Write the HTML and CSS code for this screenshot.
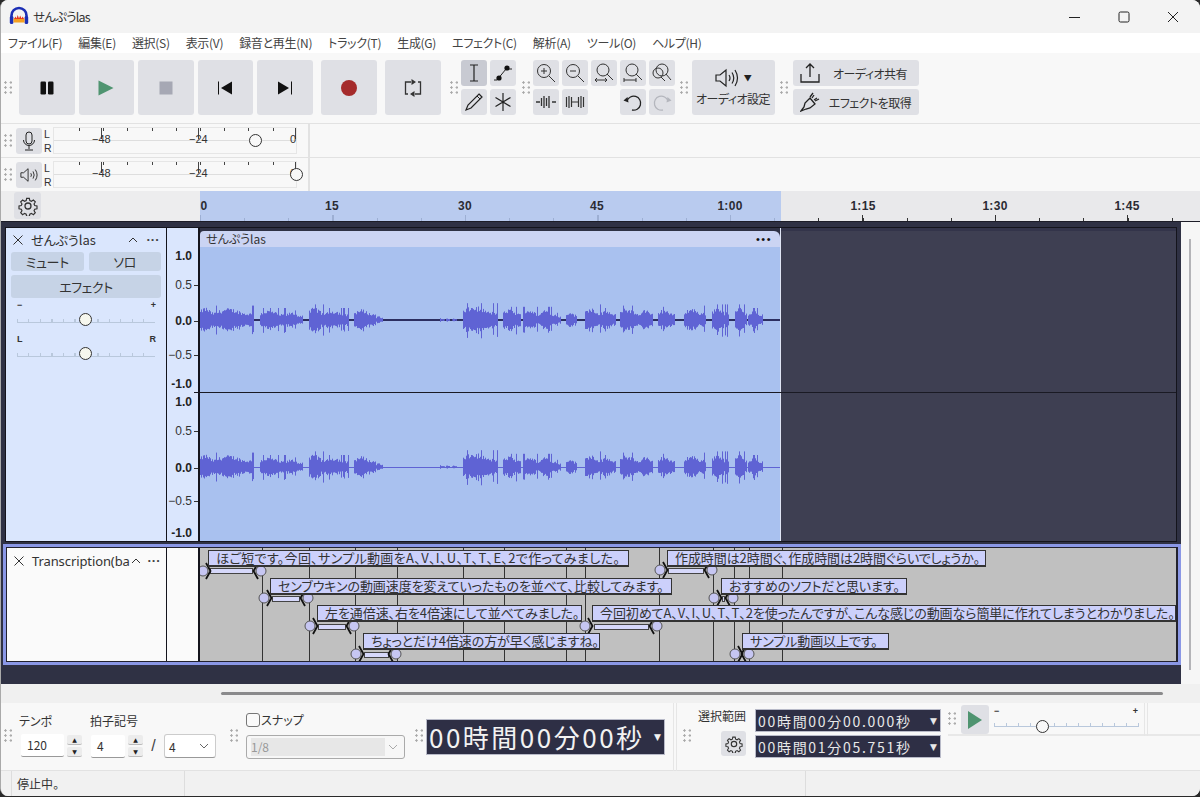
FILE: index.html
```html
<!DOCTYPE html>
<html lang="ja">
<head>
<meta charset="utf-8">
<title>せんぷうlas</title>
<link rel="stylesheet" href="styles.css">
</head>
<body>
<div class="window">
  <header class="titlebar">
    <svg class="logo" viewBox="0 0 20 20"><path d="M2.500 13V9.500a7.500 7.500 0 0 1 15 0V13" fill="none" stroke="#1c2fb5" stroke-width="2.600"/><rect x="0.800" y="10" width="3.600" height="8" rx="1.500" fill="#1c2fb5"/><rect x="15.600" y="10" width="3.600" height="8" rx="1.500" fill="#1c2fb5"/><path d="M4.500 12.500h11v4h-11z" fill="#f5a020"/><path d="M5 13l1.500-2.500 1 2 1.200-3.500 1.300 3.500 1.200-3 1.300 3 1.200-2 1.300 2.500z" fill="#e8381c"/></svg>
    <span class="title">せんぷうlas</span>
    <div class="winctl">
      <svg viewBox="0 0 12 12"><path d="M0 6.500h11" stroke="#222" fill="none"/></svg>
      <svg viewBox="0 0 12 12"><rect x="1" y="1" width="10" height="10" rx="1.500" stroke="#222" fill="none"/></svg>
      <svg viewBox="0 0 12 12"><path d="M1 1l10 10M11 1L1 11" stroke="#222" fill="none"/></svg>
    </div>
  </header>
  <nav class="menubar">
    <span>ファイル(F)</span><span>編集(E)</span><span>選択(S)</span><span>表示(V)</span><span>録音と再生(N)</span><span>トラック(T)</span><span>生成(G)</span><span>エフェクト(C)</span><span>解析(A)</span><span>ツール(O)</span><span>ヘルプ(H)</span>
  </nav>
  <section class="toolbar">
    <i class="grip"></i>
    <div class="transport">
      <button class="big"><svg viewBox="0 0 16 16"><rect x="1.500" y="1.500" width="5.500" height="13" rx="1.200" fill="#111"/><rect x="9" y="1.500" width="5.500" height="13" rx="1.200" fill="#111"/></svg></button>
      <button class="big"><svg viewBox="0 0 16 16"><path d="M0.500 0.500L15.500 8 0.500 15.500z" fill="#4f9470"/></svg></button>
      <button class="big"><svg viewBox="0 0 16 16"><rect x="1.500" y="1.500" width="13" height="13" fill="#a6a8b4"/></svg></button>
      <button class="big"><svg viewBox="0 0 16 16"><path d="M1.500 1.500v13" stroke="#111" fill="none"/><path d="M15 1.500v13L4 8z" fill="#111"/></svg></button>
      <button class="big"><svg viewBox="0 0 16 16"><path d="M14.500 1.500v13" stroke="#111" fill="none"/><path d="M1 1.500v13L12 8z" fill="#111"/></svg></button>
      <button class="big gap-l"><svg viewBox="0 0 16 16"><circle cx="8" cy="8" r="8" fill="#a52b2b"/></svg></button>
      <button class="big gap-l"><svg class="loop" viewBox="0 0 18 18"><path d="M7 3H1.500v12h2.500M11 15h5.500V3H14" fill="none" stroke="#333" stroke-width="1.300"/><path d="M12 3l-4.500-3v6zM6 15l4.500-3v6z" fill="#333"/></svg></button>
    </div>
    <i class="grip g-tools"></i>
    <div class="tools">
      <button class="sm on"><svg viewBox="0 0 20 20"><path d="M6 2h8M6 18h8M10 2v16" stroke="#222" fill="none" stroke-width="1.200"/></svg></button>
      <button class="sm"><svg viewBox="0 0 20 20"><path d="M1 17h3l9-11h6" fill="none" stroke="#222"/><circle cx="6" cy="15" r="2.600" fill="#111"/><circle cx="14" cy="5" r="2.600" fill="#111"/></svg></button>
      <button class="sm"><svg viewBox="0 0 20 20"><path d="M15 2l3 3L7 16l-5 2 2-5z" fill="none" stroke="#222" stroke-width="1.200"/><path d="M13 4l3 3" stroke="#222"/></svg></button>
      <button class="sm"><svg viewBox="0 0 20 20"><path d="M10 1v18M2.500 5.500l15 9M17.500 5.500l-15 9" stroke="#222" fill="none" stroke-width="1.200"/></svg></button>
    </div>
    <i class="grip g-zoom"></i>
    <div class="zooms">
      <button class="sm"><svg viewBox="0 0 20 20"><circle cx="8" cy="8" r="6.500" fill="none" stroke="#333"/><path d="M13 13l6 6M5 8h6M8 5v6" stroke="#333" fill="none"/></svg></button>
      <button class="sm"><svg viewBox="0 0 20 20"><circle cx="8" cy="8" r="6.500" fill="none" stroke="#333"/><path d="M13 13l6 6M5 8h6" stroke="#333" fill="none"/></svg></button>
      <button class="sm"><svg viewBox="0 0 20 20"><circle cx="9" cy="7" r="6" fill="none" stroke="#333"/><path d="M13 11l6 6M1 17h12M3 15l-2 2 2 2M11 15l2 2-2 2" stroke="#333" fill="none"/></svg></button>
      <button class="sm"><svg viewBox="0 0 20 20"><circle cx="9" cy="7" r="6" fill="none" stroke="#333"/><path d="M13 11l6 6M1 17h12M1 15v4M13 15v4" stroke="#333" fill="none"/></svg></button>
      <button class="sm"><svg viewBox="0 0 20 20"><circle cx="10" cy="7" r="6" fill="none" stroke="#333"/><circle cx="6" cy="10" r="5" fill="none" stroke="#333"/><path d="M14 11l5 6M9 14l4 4" stroke="#333" fill="none"/></svg></button>
      <button class="sm"><svg viewBox="0 0 20 20"><path d="M0 10h4M16 10h4M5.500 6v8M8 4v12M10.500 6v8M13 4v12" stroke="#333" fill="none" stroke-width="1.300"/></svg></button>
      <button class="sm"><svg viewBox="0 0 20 20"><path d="M7 10h6M1.500 5v10M4 4v12M6.500 5v10M13.500 5v10M16 4v12M18.500 5v10" stroke="#333" fill="none" stroke-width="1.200"/></svg></button>
      <span class="blank"></span>
      <button class="sm"><svg viewBox="0 0 20 20"><path d="M4 9a7 7 0 1 1 5 9" fill="none" stroke="#222" stroke-width="1.300"/><path d="M0.500 8.500L4.500 5l1 5.500z" fill="#222"/></svg></button>
      <button class="sm"><svg viewBox="0 0 20 20"><path d="M16 9a7 7 0 1 0-5 9" fill="none" stroke="#b4b6bd" stroke-width="1.300"/><path d="M19.500 8.500L15.500 5l-1 5.500z" fill="#b4b6bd"/></svg></button>
    </div>
    <i class="grip g-audio"></i>
    <button class="audio">
      <span class="audio-ic"><svg viewBox="0 0 24 20"><path d="M1 7v6h4l6 5V2L5 7z" fill="none" stroke="#222" stroke-width="1.200"/><path d="M14 7q2 3 0 6M17 4.500q3.500 5.500 0 11M20 2q5 8 0 16" fill="none" stroke="#222" stroke-width="1.200"/></svg><b>▼</b></span>
      <span>オーディオ設定</span>
    </button>
    <i class="grip g-share"></i>
    <div class="shares">
      <button class="wide"><svg viewBox="0 0 20 20"><path d="M1 11v8h18v-8M10 14V2M6 5l4-4 4 4" fill="none" stroke="#222" stroke-width="1.300"/></svg><span>オーディオ共有</span></button>
      <button class="wide"><svg viewBox="0 0 20 20"><path d="M1 19l3-4 1-4 5-5 5 6-5 4-4 1zM10 5l3-4M15 9l4-2M12 6l2-3M14 8l3-2" fill="none" stroke="#222" stroke-width="1.300"/></svg><span>エフェクトを取得</span></button>
    </div>
  </section>

  <section class="meter-row">
    <i class="grip"></i>
    <button class="mbtn"><svg viewBox="0 0 16 20"><rect x="5" y="1" width="6" height="12" rx="3" fill="none" stroke="#222"/><path d="M2.500 9a5.500 5.500 0 0 0 11 0M8 15v3M4 19h8" fill="none" stroke="#222"/></svg></button>
    <div class="lr"><span>L</span><span>R</span></div>
    <div class="meter"><span class="mt" style="left:38px">−48</span><span class="mt" style="left:135px">−24</span><span class="mt" style="left:236px">0</span><i class="knob" style="left:195px"></i></div>
    <span class="meter-sep"></span>
  </section>
  <section class="meter-row">
    <i class="grip"></i>
    <button class="mbtn"><svg viewBox="0 0 20 20"><path d="M1 7.500v5h3l5 4.500V3L4 7.500z" fill="none" stroke="#222"/><path d="M12 8q1.500 2 0 4M14.500 6q2.500 4 0 8M17 4q4 6 0 12" fill="none" stroke="#222"/></svg></button>
    <div class="lr"><span>L</span><span>R</span></div>
    <div class="meter"><span class="mt" style="left:38px">−48</span><span class="mt" style="left:135px">−24</span><span class="mt" style="left:236px">0</span><i class="knob" style="left:236px"></i></div>
    <span class="meter-sep"></span>
  </section>

  <section class="ruler">
    <div class="ruler-left"><button class="gear"><svg viewBox="0 0 20 20"><use href="#gear"/></svg></button></div>
    <div class="ruler-track">
      <div class="sel-band"></div>
      <span class="rt" style="left:4px">0</span><span class="rt" style="left:132px">15</span><span class="rt" style="left:265px">30</span><span class="rt" style="left:397px">45</span><span class="rt" style="left:530px">1:00</span><span class="rt" style="left:663px">1:15</span><span class="rt" style="left:795px">1:30</span><span class="rt" style="left:927px">1:45</span>
    </div>
  </section>

  <main class="tracks">
    <div class="tracks-main">
      <div class="audio-track">
        <aside class="panel">
          <div class="ph"><span class="x"><svg viewBox="0 0 10 10"><path d="M.5.500l9 9M9.500.500l-9 9" stroke="#333" fill="none"/></svg></span><span class="pname">せんぷうlas</span><svg class="chev" viewBox="0 0 10 6"><path d="M1 5l4-4 4 4" fill="none" stroke="#333"/></svg><span class="dots">···</span></div>
          <div class="prow"><span class="pbtn">ミュート</span><span class="pbtn">ソロ</span></div>
          <div class="pbtn fx">エフェクト</div>
          <div class="slabel"><span>−</span><span>+</span></div>
          <div class="slider"><i></i></div>
          <div class="slabel s2"><span>L</span><span>R</span></div>
          <div class="slider"><i></i></div>
        </aside>
        <div class="vruler">
          <b class="v1">1.0</b><span class="v2 tk">0.5</span><b class="v3 tk">0.0</b><span class="v4 tk">−0.5</span><b class="v5">-1.0</b>
          <b class="v6">1.0</b><span class="v7 tk">0.5</span><b class="v8 tk">0.0</b><span class="v9 tk">−0.5</span><b class="v10">-1.0</b>
        </div>
        <div class="clip">
          <div class="clip-head"><span>せんぷうlas</span><span class="cdots">•••</span></div>
          <div class="clip-body">
            <svg class="wave" viewBox="200 247 580 294"><rect class="c1" x="200" y="319" width="580" height="2"/><rect class="c2" x="200" y="467" width="580" height="1"/><path id="w1" class="wp"/><path id="w2" class="wp"/></svg>
          </div>
        </div>
        <div class="empty"></div>
        <div class="chan-line"></div>
      </div>
      <div class="label-track">
        <aside class="lpanel"><div class="ph"><span class="x"><svg viewBox="0 0 10 10"><path d="M.5.500l9 9M9.500.500l-9 9" stroke="#333" fill="none"/></svg></span><span class="lname">Transcription(ba</span><svg class="chev c-l" viewBox="0 0 10 6"><path d="M1 5l4-4 4 4" fill="none" stroke="#333"/></svg><span class="dots d-l">···</span></div></aside>
        <div class="lruler"></div>
        <div class="lcanvas">
          <svg class="lsvg" viewBox="200 548 976 113">
            <defs>
              <g id="hl"><circle class="hk" r="5"/><path class="hc" d="M3-8L7.500 0 3 8"/></g>
              <g id="hr"><circle class="hk" r="5"/><path class="hc" d="M-3-8L-7.500 0-3 8"/></g>
            </defs>
            <path class="vl" d="M262.500 548V661M309.500 548V661M355.500 548V661M397.500 548V661M463.500 548V661M504.500 548V661M566.500 548V661M585.500 548V661M659.500 548V661M713.500 548V661M734.500 548V661M749.500 548V661M782.500 548V661"/>
            <g class="hs">
              <rect x="210.500" y="568.500" width="42" height="5"/><use href="#hl" x="203" y="571"/><use href="#hr" x="261" y="571"/>
              <rect x="272.500" y="596.500" width="27" height="5"/><use href="#hl" x="264" y="598"/><use href="#hr" x="308" y="598"/>
              <rect x="318.500" y="624.500" width="27" height="5"/><use href="#hl" x="310" y="626"/><use href="#hr" x="354" y="626"/>
              <rect x="364.500" y="652.500" width="24" height="5"/><use href="#hl" x="356" y="654"/><use href="#hr" x="396" y="654"/>
              <rect x="668.500" y="568.500" width="35" height="5"/><use href="#hl" x="660" y="570"/><use href="#hr" x="712" y="570"/>
              <rect x="722.500" y="596.500" width="2" height="5"/><use href="#hl" x="714" y="598"/><use href="#hr" x="733" y="598"/>
              <rect x="594.500" y="624.500" width="54" height="5"/><use href="#hl" x="585" y="626"/><use href="#hr" x="657" y="626"/>
              <use href="#hl" x="735" y="654"/><use href="#hr" x="749" y="654"/>
            </g>
          </svg>
          <div class="lab r1 airy" style="left:8px;width:421px">ほご短です。今回、サンプル動画をA、V、I、U、T、T、E、2で作ってみました。</div>
          <div class="lab r2" style="left:70px;width:402px">センブウキンの動画速度を変えていったものを並べて、比較してみます。</div>
          <div class="lab r3" style="left:117px;width:265px">左を通倍速、右を4倍速にして並べてみました。</div>
          <div class="lab r4" style="left:163px;width:237px">ちょっとだけ4倍速の方が早く感じますね。</div>
          <div class="lab r1" style="left:467px;width:319px">作成時間は2時間ぐ、作成時間は2時間ぐらいでしょうか。</div>
          <div class="lab r2" style="left:521px;width:186px">おすすめのソフトだと思います。</div>
          <div class="lab r3" style="left:392px;width:584px">今回初めてA、V、I、U、T、T、2を使ったんですが、こんな感じの動画なら簡単に作れてしまうとわかりました。</div>
          <div class="lab r4" style="left:542px;width:147px">サンプル動画以上です。</div>
        </div>
      </div>
    </div>
    <div class="vscroll"><i></i></div>
  </main>

  <div class="hscroll"><i></i></div>

  <section class="bottom">
    <i class="grip g-b0"></i>
    <div class="field f-tempo">
      <label>テンポ</label>
      <div class="fr"><span class="num n1">120</span><span class="spin"><b>▲</b><b>▼</b></span></div>
    </div>
    <div class="field f-sig">
      <label>拍子記号</label>
      <div class="fr"><span class="num n2">4</span><span class="spin"><b>▲</b><b>▼</b></span><span class="slash">/</span><span class="sel4">4<svg viewBox="0 0 10 6"><path d="M1 1l4 4 4-4" fill="none" stroke="#666"/></svg></span></div>
    </div>
    <i class="grip g-b1"></i>
    <div class="field f-snap">
      <label class="snap"><i class="cb"></i>スナップ</label>
      <div class="snapsel"><span>1/8</span><svg viewBox="0 0 10 6"><path d="M1 1l4 4 4-4" fill="none" stroke="#aaa"/></svg></div>
    </div>
    <i class="grip g-b2"></i>
    <div class="timebig"><span>00時間00分00秒</span><b>▼</b></div>
    <i class="vsep s-a"></i>
    <i class="grip g-b3"></i>
    <div class="selrange">
      <div class="sel-left"><span>選択範囲</span><button class="gear g2"><svg viewBox="0 0 20 20"><use href="#gear"/></svg></button></div>
      <div class="sel-times">
        <div class="timesm"><span>00時間00分00.000秒</span><b>▼</b></div>
        <div class="timesm"><span>00時間01分05.751秒</span><b>▼</b></div>
      </div>
    </div>
    <div class="playspeed">
      <div class="ps-row">
        <i class="grip g-b4"></i>
        <button class="ps-play"><svg viewBox="0 0 14 18"><path d="M0 0l14 9L0 18z" fill="#4f9470"/></svg></button>
        <div class="ps-slider"><div class="ps-l"><span>−</span><span>+</span></div><div class="ps-track"><i></i></div></div>
        <i class="vsep s-b"></i>
      </div>
    </div>
  </section>

  <footer class="status">
    <i class="st st1"></i><span class="st-text">停止中。</span><i class="st st2"></i>
  </footer>
</div>

<svg class="defs" width="0" height="0"><defs><g id="gear"><path d="M8.500 1.500h3l.5 2.500 1.800.8 2.200-1.400 2.100 2.100-1.400 2.200.8 1.800 2.500.5v3l-2.500.5-.8 1.800 1.400 2.200-2.100 2.100-2.200-1.400-1.800.8-.5 2.500h-3l-.5-2.500-1.800-.8-2.200 1.400-2.100-2.100 1.400-2.200-.8-1.800-2.500-.5v-3l2.500-.5.8-1.800-1.400-2.200 2.100-2.100 2.200 1.400 1.800-.8z" transform="translate(1 1) scale(.9)" fill="none" stroke="#333" stroke-width="1.300"/><circle cx="10" cy="10" r="3" fill="none" stroke="#333" stroke-width="1.300"/></g></defs></svg>
<script src="wave.js"></script>
</body>
</html>
```

FILE: styles.css
```css
* { box-sizing: border-box; }
html, body { margin: 0; height: 100%; background: #2a2a2a; overflow: hidden; }
body { font-family: "Noto Sans CJK JP", "Noto Sans", sans-serif; font-feature-settings: "palt"; color: #333; font-size: 12px; }
button { border: 0; padding: 0; margin: 0; font: inherit; color: inherit; display: flex; align-items: center; justify-content: center; }
i { display: block; font-style: normal; }
.defs { position: absolute; }

.window { width: 1200px; height: 796px; background: #f8f8f8; border-radius: 8px; overflow: hidden; display: flex; flex-direction: column; border-left: 1px solid #aaa; }

.titlebar { height: 33px; background: #f3f3f3; display: flex; align-items: center; padding-left: 8px; flex: none; }
.logo { width: 20px; height: 20px; margin-top: -1px; }
.title { margin-left: 4px; font-size: 12.500px; letter-spacing: -.8px; line-height: 16px; color: #333; }
.winctl { margin-left: auto; display: flex; gap: 37px; padding-right: 21px; }
.winctl svg { width: 12px; height: 12px; }

.menubar { height: 20px; background: #fff; display: flex; gap: 16px; padding-left: 7px; flex: none; font-size: 12px; letter-spacing: -.3px; line-height: 20px; color: #444; }

.toolbar { height: 71px; flex: none; display: flex; align-items: center; padding: 0 0 0 3px; border-bottom: 1px solid #e2e2e2; }
.grip { width: 8px; height: 14px; flex: none; background-image: radial-gradient(circle at 1.500px 1.500px, #a8a8a8 1px, transparent 1.300px); background-size: 5.500px 5px; }
.toolbar > .grip { margin-top: -1px; }
.transport { display: flex; gap: 4px; margin-left: 7px; margin-top: -1px; }
button.big { width: 55.500px; height: 55px; background: #dfe0e5; border-radius: 3px; }
button.big svg { width: 16px; height: 16px; }
button.big svg.loop { width: 18px; height: 18px; }
button.gap-l { margin-left: 4.500px; }
.g-tools { margin-left: 9px; }
.tools { display: grid; grid-template-columns: 26px 26px; grid-auto-rows: 26px; gap: 3px; margin-left: 3px; margin-top: -1px; }
button.sm { width: 26px; height: 26px; background: #dfe0e5; border-radius: 3px; }
button.sm.on { background: #c8cad2; }
button.sm svg { width: 20px; height: 20px; }
.g-zoom { margin-left: 6px; }
.zooms { display: grid; grid-template-columns: repeat(5, 26px); grid-auto-rows: 26px; gap: 3px; margin-left: 3px; margin-top: -1px; }
.g-audio { margin-left: 5px; }
button.audio { width: 83px; height: 55px; margin-left: 4px; margin-top: -1px; background: #dfe0e5; border-radius: 3px; flex-direction: column; font-size: 12px; letter-spacing: -.5px; line-height: 16px; gap: 3px; }
.audio-ic { display: flex; align-items: center; gap: 5px; }
.audio-ic svg { width: 24px; height: 20px; }
.audio-ic b { font-size: 8px; line-height: 10px; color: #222; }
.g-share { margin-left: 5px; }
.shares { display: flex; flex-direction: column; gap: 3px; margin-left: 5px; margin-top: -1px; }
button.wide { width: 126px; height: 26px; background: #dfe0e5; border-radius: 3px; justify-content: flex-start; padding-left: 7px; font-size: 12px; letter-spacing: -.5px; }
button.wide svg { width: 20px; height: 20px; flex: none; }
button.wide span { flex: 1; text-align: center; padding-left: 2px; }

.meter-row { height: 34px; flex: none; display: flex; align-items: center; padding-left: 3px; border-bottom: 1px solid #e2e2e2; }
.mbtn { width: 26px; height: 26px; background: #dfe0e5; border-radius: 3px; margin-left: 4px; flex: none; }
.mbtn svg { width: 18px; height: 20px; }
.lr { width: 9px; margin-left: 2px; display: flex; flex-direction: column; font-size: 10.500px; line-height: 14px; font-family: "Liberation Sans", sans-serif; color: #333; }
.meter { position: relative; width: 244px; height: 27px; border: 1px solid #e6e6e6; background:
  linear-gradient(#dedede, #dedede) 0 12px / 100% 1px no-repeat,
  repeating-linear-gradient(90deg, #444 0 1px, transparent 1px 97px) 47px 0 / 100% 11px no-repeat,
  repeating-linear-gradient(90deg, #444 0 1px, transparent 1px 24.200px) 25px 0 / 100% 3px no-repeat;
}
.mt { position: absolute; top: 5px; font-size: 11px; line-height: 13px; font-family: "Liberation Sans", sans-serif; color: #333; }
.knob { position: absolute; top: 6px; width: 13px; height: 13px; border-radius: 50%; border: 1.500px solid #333; background: #f8f8f8; }
.meter-sep { width: 10px; height: 100%; border-right: 2px solid #e2e2e2; margin-left: 3px; }

.ruler { height: 31px; flex: none; display: flex; border-bottom: 1px solid #1d1d28; background: #e9e9eb; margin-top: -1px; }
.ruler-left { width: 199px; flex: none; padding-left: 13px; padding-top: 1px; background: #ededee; }
.gear { width: 27px; height: 27px; background: #dfe0e5; border-radius: 3px; }
.gear svg { width: 20px; height: 20px; }
.ruler-track { position: relative; flex: 1; background:
  repeating-linear-gradient(90deg, #333 0 1px, transparent 1px 132.500px) 0 100% / 100% 6px no-repeat,
  repeating-linear-gradient(90deg, #333 0 1px, transparent 1px 44.170px) 0 100% / 100% 3px no-repeat; }
.sel-band { position: absolute; left: 0; top: 0; bottom: 0; width: 581px; background: rgba(176, 197, 240, .85); }
.rt { position: absolute; top: 8px; transform: translateX(-50%); font: bold 12px/15px "Liberation Sans", sans-serif; color: #2b2b33; letter-spacing: .3px; }

.tracks { height: 462px; flex: none; display: flex; background: #2f3144; }
.tracks-main { width: 1180px; flex: none; padding: 5px 0 0 4px; display: flex; flex-direction: column; }
.vscroll { flex: 1; background: #f6f6f6; padding: 17px 0 14px 8px; }
.vscroll i { width: 2px; height: 100%; background: #b4b4b8; }

.audio-track { position: relative; width: 1172px; height: 315px; border: 1px solid #14141c; display: flex; flex: none; }
.panel { width: 161px; flex: none; background: #dae6fd; border-right: 1px solid #14141c; padding: 0 5px; }
.ph { height: 24px; display: flex; align-items: center; padding-left: 2px; }
.panel .ph { margin-right: -5px; }
.x { width: 18px; flex: none; display: flex; align-items: center; }
.x svg { width: 10px; height: 10px; }
.pname { font-size: 13px; line-height: 16px; flex: 1; color: #333; }
.chev { width: 10px; height: 6px; flex: none; margin-right: 2px; }
.dots { width: 26px; text-align: center; font: bold 13px/10px "Liberation Sans", sans-serif; color: #444; }
.prow { display: flex; gap: 5px; }
.pbtn { flex: 1; height: 19px; background: #c6d3e6; border-radius: 3px; text-align: center; font-size: 13px; letter-spacing: -.4px; line-height: 19px; color: #333; }
.pbtn.fx { height: 23px; line-height: 23px; margin-top: 4px; }
.slabel { display: flex; justify-content: space-between; padding: 0 5px 0 6px; font: bold 9px/10px "Liberation Sans", sans-serif; color: #333; margin-top: 2px; }
.slabel.s2 { margin-top: 11px; }
.slider { position: relative; height: 12px; margin: 1px 6px 0 6px; border-bottom: 1px solid #b9c8dc; background: repeating-linear-gradient(90deg, #b9c8dc 0 1px, transparent 1px 11.500px) 0 100% / 100% 3px no-repeat; }
.slider i { position: absolute; left: 62px; top: 2px; width: 13px; height: 13px; border-radius: 50%; background: #f6f7ee; border: 1.500px solid #333; }

.vruler { position: relative; width: 33px; flex: none; background: #dae6fd; border-right: 2px solid #14141c; font: 12px/14px "Liberation Sans", sans-serif; color: #333; }
.vruler > * { position: absolute; right: 6px; }
.vruler b { color: #222; }
.tk::after { content: ""; position: absolute; right: -6px; top: 7px; width: 4px; height: 1px; background: #333; }
.v1 { top: 21px; } .v2 { top: 50px; } .v3 { top: 86px; } .v4 { top: 120px; } .v5 { top: 149px; }
.v6 { top: 167px; } .v7 { top: 196px; } .v8 { top: 233px; } .v9 { top: 266px; } .v10 { top: 298px; }

.clip { width: 581px; flex: none; display: flex; flex-direction: column; padding-top: 3px; background: #2f3144; border-right: 1px solid #dfe4f4; }
.clip-head { height: 16px; flex: none; background: #cbd4f3; border-radius: 4px 6px 0 0; display: flex; justify-content: space-between; align-items: center; padding: 0 8px 0 6px; font-size: 12px; line-height: 16px; color: #333; }
.cdots { font: 11px/10px "Liberation Sans", sans-serif; color: #111; letter-spacing: 1.500px; }
.clip-body { flex: 1; background: #a9c1ef; }
.wave { display: block; width: 580px; height: 294px; }
.wp { fill: none; stroke: #5f63d4; stroke-width: 1; }
.c1 { fill: #2c2e60; }
.c2 { fill: #5f63d4; }
.empty { flex: 1; background: #3e3f52; border-top: 3px solid #33344a; }
.chan-line { position: absolute; left: 188px; right: 0; top: 164px; height: 1px; background: #1a1a24; }

.label-track { width: 1178px; height: 121px; margin: 2px 0 0 -2px; border: 3px solid #8a97e6; display: flex; flex: none; padding: 1px; background: #22222e; }
.lpanel { width: 160px; flex: none; background: #fafafa; border-right: 1px solid #14141c; padding-left: 5px; }
.lname { font: 13px/16px "Noto Sans", sans-serif; width: 97px; white-space: nowrap; color: #333; letter-spacing: -.1px; flex: none; }
.lpanel .ph { height: 25px; padding-left: 2px; }
.c-l { margin-left: 2px; }
.d-l { width: 22px; }
.lruler { width: 33px; flex: none; background: #fafafa; border-right: 2px solid #14141c; }
.lcanvas { position: relative; width: 976px; flex: none; background: #c0c0c0; }
.lsvg { position: absolute; left: 0; top: 0; width: 976px; height: 113px; }
.vl { stroke: #333; fill: none; }
.hk { fill: #c6c6f2; stroke: #555; }
.hs rect { fill: #d6d8fa; stroke: #444; }
.hc { fill: none; stroke: #111; stroke-width: 1.800; }
.lab { position: absolute; height: 17px; background: #ccd0fb; border: 1px solid #333; border-bottom-width: 2px; padding-left: 7px; font-size: 13px; letter-spacing: -.08px; line-height: 14px; white-space: nowrap; color: #333; }
.airy { letter-spacing: .35px; }
.r1 { top: 2px; } .r2 { top: 30px; } .r3 { top: 57px; } .r4 { top: 85px; }

.hscroll { height: 19px; flex: none; background: #f0f0f0; padding: 8px 0 0 220px; }
.hscroll i { width: 942px; height: 3px; background: #8a8a8c; border-radius: 2px; }

.bottom { height: 68px; flex: none; display: flex; align-items: flex-start; padding-left: 3px; border-bottom: 1px solid #e2e2e2; background: #f8f8f8; }
.g-b0 { margin-top: 26px; }
.field { display: flex; flex-direction: column; }
.field label { font-size: 12px; line-height: 16px; color: #333; }
.fr { display: flex; align-items: center; margin-top: 5px; }
.f-tempo { margin: 10px 0 0 7px; }
.f-sig { margin: 10px 0 0 8px; }
.num { height: 23px; background: #fff; border-bottom: 1px solid #999; font-size: 12px; line-height: 22px; color: #333; border-radius: 2px; display: block; }
.n1 { width: 43px; padding-left: 6px; }
.n2 { width: 34px; padding-left: 6px; }
.spin { width: 15px; height: 22px; margin-left: 3px; display: flex; flex-direction: column; justify-content: space-between; }
.spin b { height: 10px; background: #ececec; border-bottom: 1px solid #bbb; border-radius: 2px; font: 6px/10px "DejaVu Sans", sans-serif; color: #222; text-align: center; display: block; }
.f-tempo .fr { margin-left: 2px; }
.f-sig .fr { margin-left: 1px; }
.slash { width: 21px; text-align: center; font: 16px/20px "Liberation Sans", sans-serif; color: #444; }
.sel4 { width: 52px; height: 24px; background: #fff; border: 1px solid #ccc; border-bottom-color: #999; border-radius: 3px; display: flex; align-items: center; justify-content: space-between; padding: 0 6px 0 4px; font-size: 12px; }
.sel4 svg { width: 10px; height: 6px; }
.g-b1 { margin: 26px 0 0 14px; }
.f-snap { margin: 8px 0 0 8px; }
.snap { display: flex; align-items: center; height: 18px; }
.cb { width: 14px; height: 14px; border: 1px solid #777; border-radius: 3px; background: #fafafa; margin-right: 1px; }
.snapsel { width: 159px; height: 24px; margin-top: 6px; background: #f7f7f7; border: 1px solid #aaa; border-radius: 3px; display: flex; align-items: center; justify-content: space-between; padding: 0 6px 0 4px; color: #999; }
.snapsel span { display: block; width: 134px; height: 18px; background: #e7e7e7; line-height: 18px; font-size: 12px; }
.snapsel svg { width: 10px; height: 6px; }
.g-b2 { margin: 26px 0 0 10px; }
.timebig { width: 239px; height: 36px; margin: 16px 0 0 3px; background: #2e2f45; border: 1px solid #b8bac8; display: flex; align-items: center; padding-left: 2px; color: #f2f2f2; font-size: 26px; line-height: 34px; letter-spacing: 2.500px; white-space: nowrap; }
.timebig span { flex: 1; font-feature-settings: normal; }
.timebig b { font: 9px/10px "DejaVu Sans", sans-serif; margin-right: 3px; letter-spacing: 0; }
.vsep { width: 4px; border-left: 1px solid #e6e6e6; border-right: 1px solid #e6e6e6; }
.s-a { height: 68px; margin-left: 8px; }
.g-b3 { margin: 26px 0 0 6px; }
.selrange { display: flex; margin-left: 4px; padding-top: 6px; }
.sel-left { width: 60px; display: flex; flex-direction: column; align-items: flex-end; font-size: 12px; line-height: 14px; color: #333; padding-right: 9px; }
.gear.g2 { width: 25px; height: 25px; margin-top: 8px; }
.gear.g2 svg { width: 18px; height: 18px; }
.sel-times { display: flex; flex-direction: column; gap: 3px; }
.timesm { width: 186px; height: 23px; background: #2e2f45; border: 1px solid #b8bac8; display: flex; align-items: center; padding-left: 2px; color: #e8e8e8; font-size: 14px; line-height: 20px; letter-spacing: 2.300px; white-space: nowrap; }
.timesm span { flex: 1; font-feature-settings: normal; letter-spacing: 1.700px; }
.timesm b { font: 9px/10px "DejaVu Sans", sans-serif; margin-right: 3px; letter-spacing: 0; }
.playspeed { flex: 1; height: 33px; border-bottom: 2px solid #e8e8e8; margin-left: 7px; }
.ps-row { display: flex; align-items: flex-start; height: 31px; }
.g-b4 { margin-top: 9px; }
.ps-play { width: 28px; height: 29px; margin: 2px 0 0 5px; background: #dfe0e5; border-radius: 3px; flex: none; }
.ps-play svg { width: 14px; height: 18px; }
.ps-slider { width: 145px; margin: 3px 0 0 5px; flex: none; }
.ps-l { display: flex; justify-content: space-between; font: bold 9px/10px "Liberation Sans", sans-serif; padding: 0 1px 0 0; color: #333; }
.ps-track { position: relative; height: 10px; margin-top: 1px; border-bottom: 1px solid #b9c8dc; background: repeating-linear-gradient(90deg, #b9c8dc 0 1px, transparent 1px 12px) 0 100% / 100% 3px no-repeat; }
.ps-track i { position: absolute; left: 42px; top: 3px; width: 13px; height: 13px; border-radius: 50%; border: 1.500px solid #333; background: #f8f8f8; }
.s-b { height: 33px; margin-left: 5px; }

.status { flex: 1; background: #f1f1f1; display: flex; align-items: center; font-size: 12px; line-height: 16px; color: #333; }
.st { width: 1px; height: 100%; background: #ddd; flex: none; }
.st1 { margin-left: 10px; }
.st-text { width: 172px; padding-left: 5px; }
.st2 { margin-right: 621px; box-shadow: 621px 0 0 #ddd; }
```

FILE: wave.js
```js
(function () {
  var segs = [
    [200, 215, 13], [216, 253, 12], [260, 285, 10], [286, 302, 8], [309, 325, 13], [326, 348, 10],
    [354, 375, 11], [376, 382, 4], [440, 444, 1.5], [446, 449, 2], [452, 456, 1.5],
    [463, 497, 14], [503, 520, 11], [523, 540, 11], [541, 552, 11], [553, 560, 6], [566, 576, 9],
    [585, 601, 13], [602, 615, 10], [620, 640, 12], [641, 652, 11], [658, 674, 11], [684, 705, 12],
    [712, 728, 13], [735, 746, 13], [748, 762, 10]
  ];
  var seed = 12345;
  function rnd() {
    seed = (seed * 1103515245 + 12345) & 0x7fffffff;
    return seed / 0x7fffffff;
  }
  var cols = [];
  segs.forEach(function (s) {
    for (var x = s[0]; x <= s[1]; x++) {
      var t = (x - s[0]) / Math.max(1, s[1] - s[0]);
      var env = 0.6 + 0.4 * Math.sin(Math.PI * Math.min(1, t * 1.2 + 0.1));
      var a = s[2] * env * (0.6 + 0.4 * rnd());
      if (rnd() < 0.1) a = s[2] * 1.2;
      cols.push([x + 0.5, a, a * (0.8 + 0.3 * rnd())]);
    }
  });
  function build(cy) {
    return cols.map(function (c) {
      return 'M' + c[0] + ' ' + (cy - c[1]).toFixed(1) + 'V' + (cy + c[2]).toFixed(1);
    }).join('');
  }
  document.getElementById('w1').setAttribute('d', build(320));
  document.getElementById('w2').setAttribute('d', build(467));
})();
```
